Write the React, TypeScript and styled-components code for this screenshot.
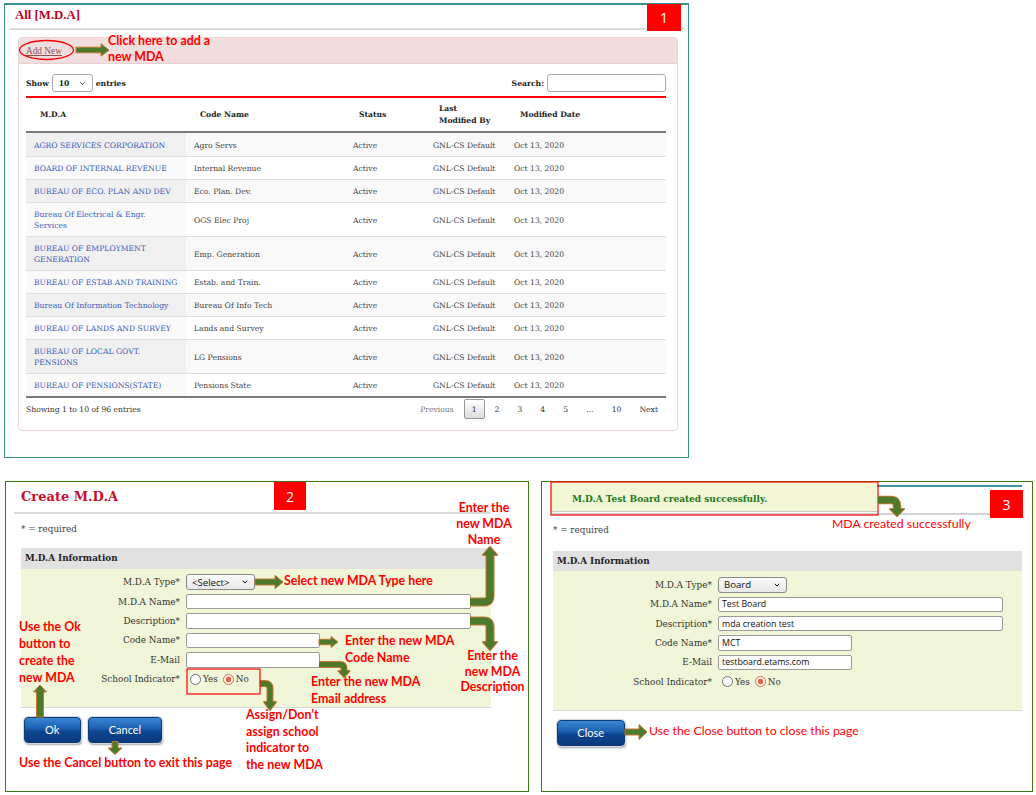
import React from "react";
import styled, { createGlobalStyle } from "styled-components";
import { ChevronDown } from "lucide-react";

const SERIF = `"DejaVu Serif", "Liberation Serif", serif`;
const TIMES = `"Liberation Serif", "Times New Roman", serif`;
const SANS = `"Open Sans", "Noto Sans", sans-serif`;
const NOTE = `Lato, "Open Sans", sans-serif`;
const GREEN = "#4c7a2a";
const EDGE = "#c27a33";
const RED = "#ff0000";

type Pt = [number, number];

const mdaRows = [
  { name: ["AGRO SERVICES CORPORATION"], code: "Agro Servs" },
  { name: ["BOARD OF INTERNAL REVENUE"], code: "Internal Revenue" },
  { name: ["BUREAU OF ECO. PLAN AND DEV"], code: "Eco. Plan. Dev." },
  { name: ["Bureau Of Electrical & Engr.", "Services"], code: "OGS Elec Proj" },
  { name: ["BUREAU OF EMPLOYMENT", "GENERATION"], code: "Emp. Generation" },
  { name: ["BUREAU OF ESTAB AND TRAINING"], code: "Estab. and Train." },
  { name: ["Bureau Of Information Technology"], code: "Bureau Of Info Tech" },
  { name: ["BUREAU OF LANDS AND SURVEY"], code: "Lands and Survey" },
  { name: ["BUREAU OF LOCAL GOVT.", "PENSIONS"], code: "LG Pensions" },
  { name: ["BUREAU OF PENSIONS(STATE)"], code: "Pensions State" },
];

const pages = ["1", "2", "3", "4", "5", "…", "10"];

const GlobalStyle = createGlobalStyle`
  html, body { margin: 0; padding: 0; background: #fff; }
  * { box-sizing: border-box; }
`;

// ---------- arrows / annotation drawing ----------

const pts = (list: Pt[]) => list.map((p) => p.join(",")).join(" ");

function Straight({ from, to, s = 6, h = 6.5, hl = 8 }: { from: Pt; to: Pt; s?: number; h?: number; hl?: number }) {
  const len = Math.hypot(to[0] - from[0], to[1] - from[1]);
  const dx = (to[0] - from[0]) / len;
  const dy = (to[1] - from[1]) / len;
  const nx = -dy;
  const ny = dx;
  const bx = to[0] - dx * hl;
  const by = to[1] - dy * hl;
  const hs = s / 2;
  const poly: Pt[] = [
    [from[0] + nx * hs, from[1] + ny * hs],
    [bx + nx * hs, by + ny * hs],
    [bx + nx * h, by + ny * h],
    to,
    [bx - nx * h, by - ny * h],
    [bx - nx * hs, by - ny * hs],
    [from[0] - nx * hs, from[1] - ny * hs],
  ];
  return <polygon points={pts(poly)} fill={GREEN} stroke={EDGE} strokeWidth={1} />;
}

function Elbow({ from, cx, tip, s = 6, h = 7, hl = 8, r = 6 }: { from: Pt; cx: number; tip: number; s?: number; h?: number; hl?: number; r?: number }) {
  const [x0, y0] = from;
  const dir = tip > y0 ? 1 : -1;
  const end = tip - dir * (hl - 1);
  const d = `M ${x0} ${y0} H ${cx - r} Q ${cx} ${y0} ${cx} ${y0 + dir * r} V ${end}`;
  const head = pts([
    [cx - h, tip - dir * hl],
    [cx + h, tip - dir * hl],
    [cx, tip],
  ]);
  return (
    <g>
      <path d={d} fill="none" stroke={EDGE} strokeWidth={s + 2} />
      <polygon points={head} fill={EDGE} stroke={EDGE} strokeWidth={2} strokeLinejoin="round" />
      <path d={d} fill="none" stroke={GREEN} strokeWidth={s} />
      <polygon points={head} fill={GREEN} />
    </g>
  );
}

// ---------- page frame ----------

const Page = styled.div`
  width: 1036px;
  height: 795px;
  overflow: hidden;
  background: #fff;
  padding: 3px 0 0 4px;
  display: flex;
  flex-direction: column;
  gap: 23px;
  font-family: ${SERIF};
  color: #333;
`;

const ListPanel = styled.section`
  position: relative;
  width: 685px;
  height: 455px;
  border: 1px solid #3a9393;
  border-top-width: 2px;
`;

const BottomRow = styled.div`
  display: flex;
  gap: 12px;
  margin-left: 1px;
`;

const FormPanel = styled.section<{ $w: number }>`
  position: relative;
  width: ${(p) => p.$w}px;
  height: 311px;
  border: 1px solid #3c7a12;
`;

const Overlay = styled.div<{ $bt?: number }>`
  position: absolute;
  left: -1px;
  right: -1px;
  top: ${(p) => -(p.$bt ?? 1)}px;
  bottom: -1px;
  pointer-events: none;
  z-index: 2;
`;

const Drawing = styled.svg`
  position: absolute;
  left: 0;
  top: 0;
`;

const Badge = styled.div<{ $x: number; $y: number; $w: number; $h: number }>`
  position: absolute;
  left: ${(p) => p.$x}px;
  top: ${(p) => p.$y}px;
  width: ${(p) => p.$w}px;
  height: ${(p) => p.$h}px;
  background: ${RED};
  color: #fff;
  font-family: ${SANS};
  font-size: 14px;
  display: flex;
  align-items: center;
  justify-content: center;
`;

const Note = styled.div<{ $x: number; $y: number; $lh?: number; $center?: boolean; $plain?: boolean }>`
  position: absolute;
  left: ${(p) => p.$x}px;
  top: ${(p) => p.$y}px;
  transform: ${(p) => (p.$center ? "translateX(-50%)" : "none")};
  text-align: ${(p) => (p.$center ? "center" : "left")};
  font-family: ${NOTE};
  font-size: ${(p) => (p.$plain ? 12.25 : 12.4)}px;
  font-weight: ${(p) => (p.$plain ? 400 : 700)};
  line-height: ${(p) => p.$lh ?? 16.5}px;
  color: ${RED};
  white-space: pre;
`;

// ---------- panel 1 : list ----------

const ListTitle = styled.h1`
  margin: 0 4px;
  height: 25px;
  padding: 3px 0 0 6px;
  border-bottom: 2px solid #dcdcdc;
  font: bold 12.8px/14px ${TIMES};
  color: #c0001a;
`;

const ListBox = styled.div`
  margin: 7px 0 0 13px;
  width: 660px;
  border: 1px solid #ead3d3;
  border-radius: 4px;
  overflow: hidden;
`;

const BoxHead = styled.div`
  height: 26px;
  background: #f2dede;
  border-bottom: 1px solid #ebcfcf;
  padding-left: 7px;
  display: flex;
  align-items: center;
`;

const AddLink = styled.a`
  font: 9.3px ${TIMES};
  color: #8a5353;
  text-decoration: underline;
`;

const BoxBody = styled.div`
  padding: 0 11px 0 7px;
`;

const Controls = styled.div`
  display: flex;
  justify-content: space-between;
  align-items: center;
  padding: 10px 0 4px;
  font-size: 7.65px;
  font-weight: bold;
  color: #222;
`;

const ControlGroup = styled.div`
  display: flex;
  align-items: center;
  gap: 3px;
`;

const LengthSelect = styled.div`
  width: 41px;
  height: 18px;
  border: 1px solid #aaa;
  border-radius: 3px;
  padding: 0 5px 0 6px;
  display: flex;
  align-items: center;
  justify-content: space-between;
  background: #fff;
`;

const SearchBox = styled.div`
  width: 119px;
  height: 18px;
  border: 1px solid #aaa;
  border-radius: 3px;
  background: #fff;
`;

const RedRule = styled.div`
  height: 2px;
  background: ${RED};
`;

const Table = styled.table`
  width: 640px;
  table-layout: fixed;
  border-collapse: separate;
  border-spacing: 0;
  font-size: 7.65px;
`;

const Th = styled.th`
  text-align: left;
  font-weight: bold;
  color: #222;
  padding: 5px 14px 4px;
  line-height: 12px;
  border-bottom: 2px solid #7a7a7a;
  vertical-align: middle;
`;

const Tr = styled.tr<{ $odd: boolean }>`
  background: ${(p) => (p.$odd ? "#f9f9f9" : "#fff")};
  td:first-child {
    background: ${(p) => (p.$odd ? "#f0f0f0" : "#fafafa")};
  }
  &:first-child td {
    border-top-color: transparent;
  }
  &:last-child td {
    border-bottom: 2px solid #7a7a7a;
  }
`;

const Td = styled.td`
  padding: 6px 8px 5px;
  line-height: 11px;
  border-top: 1px solid #dedede;
  color: #444;
  white-space: nowrap;
  vertical-align: middle;
`;

const NameLink = styled.span`
  color: #3b5cc0;
`;

const Footer = styled.div`
  display: flex;
  justify-content: space-between;
  align-items: center;
  padding: 1px 0 11px;
  font-size: 7.65px;
  color: #333;
`;

const Pager = styled.div`
  display: flex;
  align-items: center;
`;

const PageLink = styled.span<{ $current?: boolean; $muted?: boolean }>`
  height: 20px;
  padding: 0 7px;
  margin-left: 2px;
  display: flex;
  align-items: center;
  border: 1px solid ${(p) => (p.$current ? "#979797" : "transparent")};
  border-radius: 2px;
  background: ${(p) => (p.$current ? "linear-gradient(#ffffff, #dcdcdc)" : "transparent")};
  color: ${(p) => (p.$muted ? "#777" : "#333")};
`;

// ---------- panels 2 & 3 : forms ----------

const CreateTitle = styled.h2`
  margin: 0 0 0 8px;
  width: 476px;
  height: 32px;
  padding: 7px 0 0 7px;
  border-bottom: 2px solid #dadada;
  font: bold 13px/16px ${SERIF};
  color: #c8102e;
`;

const HeaderBar = styled.div`
  margin-left: 9px;
  width: 471px;
  height: 33px;
  display: flex;
  border-bottom: 2px solid #d4d4d4;
`;

const SuccessBanner = styled.div`
  width: 326px;
  margin-top: 1px;
  height: 29px;
  background: #f2f6d4;
  border-bottom: 1px solid #c8c8c8;
  padding: 3px 0 0 21px;
  display: flex;
  align-items: center;
  font: bold 9px ${SERIF};
  color: #237a23;
`;

const TealRest = styled.div`
  flex: 1;
  margin-top: 3px;
  border-top: 2px solid #3a9a9a;
`;

const Required = styled.div<{ $ml: number }>`
  margin: 9px 0 0 ${(p) => p.$ml}px;
  font: 8.8px/12px ${SERIF};
  color: #444;
`;

const Section = styled.div<{ $ml: number; $w: number; $mt: number }>`
  margin: ${(p) => p.$mt}px 0 0 ${(p) => p.$ml}px;
  width: ${(p) => p.$w}px;
`;

const SectionHead = styled.div`
  height: 20.5px;
  background: #e1e1e1;
  padding-left: 4px;
  display: flex;
  align-items: center;
  font: bold 8.8px ${SERIF};
  color: #222;
`;

const SectionBody = styled.div`
  background: #f1f6d8;
  border-bottom: 1px solid #d9d9d9;
  padding: 4px 0 18px;
  display: grid;
  grid-template-columns: 159px 1fr;
  grid-auto-rows: 19.4px;
  column-gap: 6px;
  align-items: center;
`;

const Label = styled.div`
  text-align: right;
  font: 8.9px ${SERIF};
  color: #333;
  white-space: nowrap;
`;

const SelectBox = styled.div<{ $w: number }>`
  width: ${(p) => p.$w}px;
  height: 15.5px;
  padding: 0 5px;
  display: flex;
  align-items: center;
  justify-content: space-between;
  border: 1px solid #8a8a8a;
  border-radius: 3px;
  background: linear-gradient(#fbfbfb, #e8e8e8);
  font: 9.6px ${SANS};
  color: #111;
`;

const TextInput = styled.input<{ $w: number }>`
  display: block;
  width: ${(p) => p.$w}px;
  height: 15.5px;
  margin: 0;
  padding: 0 3px;
  border: 1px solid #9a9a9a;
  border-radius: 2px;
  background: #fff;
  font: 8.8px ${SANS};
  color: #111;
  outline: none;
`;

const RadioGroup = styled.div`
  display: flex;
  align-items: center;
  gap: 5px;
  padding-left: 4px;
`;

const RadioOption = styled.label`
  display: flex;
  align-items: center;
  gap: 2px;
  font: 8.8px ${SERIF};
  color: #333;
`;

const RadioDot = styled.span<{ $on?: boolean }>`
  width: 11px;
  height: 11px;
  border-radius: 50%;
  border: ${(p) => (p.$on ? "1.5px solid #e8643c" : "1px solid #6e6e80")};
  background: ${(p) => (p.$on ? "radial-gradient(circle, #e8643c 0 2.6px, #fff 3.1px)" : "#fff")};
`;

const ButtonRow = styled.div<{ $ml: number }>`
  display: flex;
  gap: 7.6px;
  margin: 9px 0 0 ${(p) => p.$ml}px;
`;

const BlueButton = styled.button<{ $w: number }>`
  width: ${(p) => p.$w}px;
  height: 26px;
  padding: 0;
  border: 1px solid #0d3c7a;
  border-radius: 4px;
  background: linear-gradient(#3b86d6 0%, #1b5eb0 45%, #0c4591 55%, #0a3a7e 100%);
  color: #fff;
  font: 11px ${NOTE};
  box-shadow: 0 0 0 1px #d6d6d6, 1px 2px 2px rgba(0, 0, 0, 0.35);
`;

type FormValues = { type: string; name: string; desc: string; code: string; email: string };

function MdaForm({ v }: { v: FormValues }) {
  return (
    <>
      <SectionHead>M.D.A Information</SectionHead>
      <SectionBody>
        <Label>M.D.A Type*</Label>
        <SelectBox $w={69}>
          <span>{v.type}</span>
          <ChevronDown size={8} strokeWidth={3} />
        </SelectBox>
        <Label>M.D.A Name*</Label>
        <TextInput $w={285} readOnly value={v.name} />
        <Label>Description*</Label>
        <TextInput $w={285} readOnly value={v.desc} />
        <Label>Code Name*</Label>
        <TextInput $w={134} readOnly value={v.code} />
        <Label>E-Mail</Label>
        <TextInput $w={134} readOnly value={v.email} />
        <Label>School Indicator*</Label>
        <RadioGroup>
          <RadioOption>
            <RadioDot />
            Yes
          </RadioOption>
          <RadioOption>
            <RadioDot $on />
            No
          </RadioOption>
        </RadioGroup>
      </SectionBody>
    </>
  );
}

function ListView() {
  return (
    <ListPanel>
      <ListTitle>All [M.D.A]</ListTitle>
      <ListBox>
        <BoxHead>
          <AddLink>Add New</AddLink>
        </BoxHead>
        <BoxBody>
          <Controls>
            <ControlGroup>
              Show
              <LengthSelect>
                10
                <ChevronDown size={9} strokeWidth={2.5} color="#444" />
              </LengthSelect>
              entries
            </ControlGroup>
            <ControlGroup>
              Search:
              <SearchBox />
            </ControlGroup>
          </Controls>
          <RedRule />
          <Table>
            <colgroup>
              <col style={{ width: 160 }} />
              <col style={{ width: 159 }} />
              <col style={{ width: 80 }} />
              <col style={{ width: 81 }} />
              <col style={{ width: 160 }} />
            </colgroup>
            <thead>
              <tr>
                <Th>M.D.A</Th>
                <Th>Code Name</Th>
                <Th>Status</Th>
                <Th>
                  Last
                  <br />
                  Modified By
                </Th>
                <Th>Modified Date</Th>
              </tr>
            </thead>
            <tbody>
              {mdaRows.map((row, i) => (
                <Tr key={i} $odd={i % 2 === 0}>
                  <Td>
                    <NameLink>
                      {row.name.map((line, j) => (
                        <React.Fragment key={j}>
                          {j > 0 && <br />}
                          {line}
                        </React.Fragment>
                      ))}
                    </NameLink>
                  </Td>
                  <Td>{row.code}</Td>
                  <Td>Active</Td>
                  <Td>GNL-CS Default</Td>
                  <Td>Oct 13, 2020</Td>
                </Tr>
              ))}
            </tbody>
          </Table>
          <Footer>
            <span>Showing 1 to 10 of 96 entries</span>
            <Pager>
              <PageLink $muted>Previous</PageLink>
              {pages.map((p) => (
                <PageLink key={p} $current={p === "1"}>
                  {p}
                </PageLink>
              ))}
              <PageLink>Next</PageLink>
            </Pager>
          </Footer>
        </BoxBody>
      </ListBox>
      <Overlay $bt={2}>
        <Drawing width={685} height={455} viewBox="4 3 685 455">
          <ellipse cx={46.5} cy={50} rx={27} ry={9.5} fill="none" stroke={RED} strokeWidth={1.3} />
          <Straight from={[76, 50]} to={[109, 50]} s={5.6} h={6.2} />
        </Drawing>
        <Note $x={104} $y={30} $lh={16}>{"Click here to add a\nnew MDA"}</Note>
        <Badge $x={643} $y={1} $w={34} $h={27}>1</Badge>
      </Overlay>
    </ListPanel>
  );
}

function CreateView() {
  return (
    <FormPanel $w={524}>
      <CreateTitle>Create M.D.A</CreateTitle>
      <Required $ml={15}>* = required</Required>
      <Section $ml={15} $w={470} $mt={13}>
        <MdaForm v={{ type: "<Select>", name: "", desc: "", code: "", email: "" }} />
      </Section>
      <ButtonRow $ml={17.6}>
        <BlueButton $w={57}>Ok</BlueButton>
        <BlueButton $w={73.5}>Cancel</BlueButton>
      </ButtonRow>
      <Overlay>
        <Drawing width={524} height={311} viewBox="5 481 524 311">
          <Straight from={[255, 582]} to={[283, 582]} s={6} h={6.7} />
          <Elbow from={[470, 602]} cx={490} tip={547} s={7} h={7} />
          <Elbow from={[470, 621]} cx={490} tip={650} s={7} h={7} />
          <Straight from={[319, 642]} to={[338, 642]} s={5.5} h={5.5} hl={7} />
          <Elbow from={[319, 664.5]} cx={344} tip={677} s={5} h={5.5} hl={6} r={4} />
          <Elbow from={[260, 683.5]} cx={270} tip={710} s={5} h={6} hl={8} r={5} />
          <Straight from={[40, 717]} to={[40, 685]} s={7} h={6.5} hl={7} />
          <Straight from={[115, 741.6]} to={[115, 754.5]} s={6} h={7} hl={6.5} />
          <rect x={187} y={669} width={73} height={25} fill="none" stroke={RED} strokeWidth={1.2} />
        </Drawing>
        <Badge $x={269} $y={1} $w={32} $h={28}>2</Badge>
        <Note $x={479} $y={18.6} $lh={16.2} $center>{"Enter the\nnew MDA\nName"}</Note>
        <Note $x={279} $y={91.75}>Select new MDA Type here</Note>
        <Note $x={14} $y={137} $lh={17}>{"Use the Ok\nbutton to\ncreate the\nnew MDA"}</Note>
        <Note $x={340} $y={150.5} $lh={17}>{"Enter the new MDA\nCode Name"}</Note>
        <Note $x={487.5} $y={167.25} $lh={15.5} $center>{"Enter the\nnew MDA\nDescription"}</Note>
        <Note $x={306} $y={191.5} $lh={17}>{"Enter the new MDA\nEmail address"}</Note>
        <Note $x={241} $y={226}>{"Assign/Don’t\nassign school\nindicator to\nthe new MDA"}</Note>
        <Note $x={14} $y={272.5} $lh={17}>Use the Cancel button to exit this page</Note>
      </Overlay>
    </FormPanel>
  );
}

function CreatedView() {
  return (
    <FormPanel $w={492}>
      <HeaderBar>
        <SuccessBanner>M.D.A Test Board created successfully.</SuccessBanner>
        <TealRest />
      </HeaderBar>
      <Required $ml={11}>* = required</Required>
      <Section $ml={11} $w={469} $mt={14.7}>
        <MdaForm v={{ type: "Board", name: "Test Board", desc: "mda creation test", code: "MCT", email: "testboard.etams.com" }} />
      </Section>
      <ButtonRow $ml={14.7}>
        <BlueButton $w={68}>Close</BlueButton>
      </ButtonRow>
      <Overlay>
        <Drawing width={492} height={311} viewBox="541 481 492 311">
          <rect x={551} y={482} width={327} height={33} fill="none" stroke={RED} strokeWidth={1.2} />
          <Elbow from={[878, 500]} cx={897} tip={516} s={6.5} h={7} hl={7} r={6} />
          <Straight from={[625, 732]} to={[647, 732]} s={6} h={7.5} />
        </Drawing>
        <Badge $x={449} $y={9} $w={33} $h={28}>3</Badge>
        <Note $x={291} $y={34.5} $plain>MDA created successfully</Note>
        <Note $x={108} $y={241.75} $plain>Use the Close button to close this page</Note>
      </Overlay>
    </FormPanel>
  );
}

export default function App() {
  return (
    <>
      <GlobalStyle />
      <Page>
        <ListView />
        <BottomRow>
          <CreateView />
          <CreatedView />
        </BottomRow>
      </Page>
    </>
  );
}
